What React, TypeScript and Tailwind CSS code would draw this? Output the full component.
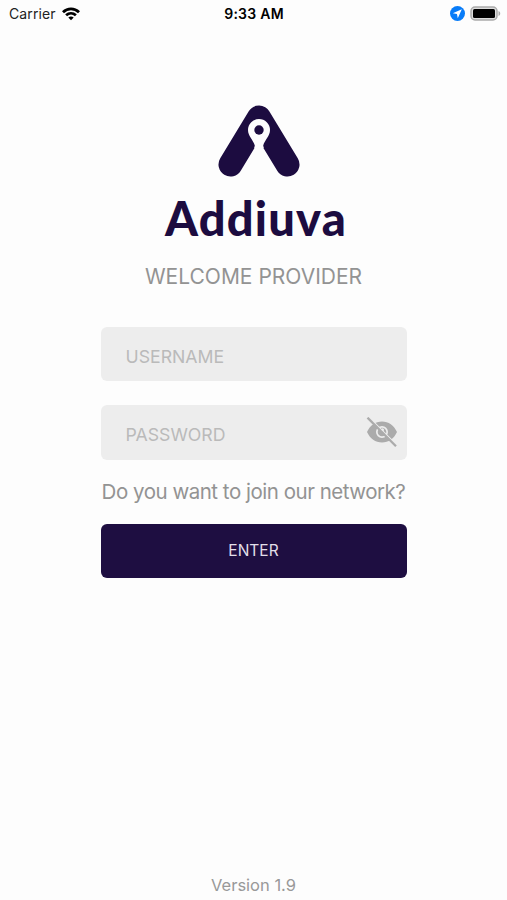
import { useState } from "react";

function StatusBar() {
  return (
    <header className="grid h-[27px] grid-cols-3 items-center pl-[9px] pr-[6px] text-[14px] text-[#222]">
      <div className="flex items-center gap-[6px]">
        <span className="tracking-[0.1px]">Carrier</span>
        <svg viewBox="0 0 18 14" className="h-[14px] w-[18px]" fill="none" stroke="#000" strokeWidth="2.8">
          <path d="M1 5.2C5.6.7 12.4.7 17 5.2" />
          <path d="M4.1 8.3C7 5.7 11 5.7 13.9 8.3" />
          <path d="M9 13.3 6.3 10.6C7.9 9.2 10.1 9.2 11.7 10.6Z" fill="#000" stroke="none" />
        </svg>
      </div>
      <span className="-ml-[2px] text-center font-semibold tracking-[0.25px] text-black">9:33 AM</span>
      <div className="flex items-center justify-end gap-[5px]">
        <svg viewBox="0 0 16 16" className="size-[15px]">
          <circle cx="8" cy="8" r="8" fill="#087cf8" />
          <path d="M12.6 3.4 3 7.7l4.4.9.9 4.4z" fill="#fff" />
        </svg>
        <svg viewBox="0 0 31 15" className="h-[15px] w-[31px]">
          <rect x="1" y="1" width="26" height="13" rx="4" fill="#ddd" stroke="#aaa" strokeWidth="1.5" />
          <rect x="3" y="3" width="22" height="9" rx="1.5" fill="#000" />
          <path d="M28.5 5v5c2.3-1.2 2.3-3.8 0-5z" fill="#aaa" />
        </svg>
      </div>
    </header>
  );
}

function Logo() {
  return (
    <div className="flex flex-col items-center text-[#1c0c40]">
      <svg viewBox="0 0 82 72" className="ml-[11px] h-[72px] w-[82px]">
        <path
          d="M12.5 59.5 41 12.5 69.5 59.5"
          fill="none"
          stroke="currentColor"
          strokeWidth="24"
          strokeLinecap="round"
          strokeLinejoin="round"
        />
        <path
          d="M41 14a11 11 0 0 0-11 11c0 6 5 9.5 6.8 15.500L36.200 43h9.600l-.600-2.500C47 34.500 52 31 52 25a11 11 0 0 0-11-11z"
          fill="#fdfdfd"
        />
        <circle cx="41" cy="25" r="4.700" fill="currentColor" />
      </svg>
      <h1 className="mt-[13px] ml-[5px] font-[Lato] text-[47px] leading-[57px] font-black tracking-[1.2px]">
        Addiuva
      </h1>
    </div>
  );
}

export default function App() {
  const [visible, setVisible] = useState(false);

  return (
    <div className="flex h-[900px] w-full flex-col bg-[#fdfdfd] font-[Inter,sans-serif]">
      <StatusBar />
      <main className="mx-auto mt-[78px] flex w-[306px] flex-col">
        <Logo />
        <h2 className="mt-[16px] text-center text-[21px] leading-[28px] whitespace-nowrap text-[#939393]">
          WELCOME PROVIDER
        </h2>
        <form className="mt-[36px] flex flex-col" onSubmit={(e) => e.preventDefault()}>
          <input
            placeholder="USERNAME"
            className="h-[54px] rounded-[6px] bg-[#ededed] px-[25px] pt-[5px] text-[17.7px] outline-none placeholder:text-[#bababa]"
          />
          <div className="mt-[24px] flex h-[55px] items-center rounded-[6px] bg-[#ededed] pr-[9px] pl-[25px]">
            <input
              type={visible ? "text" : "password"}
              placeholder="PASSWORD"
              className="min-w-0 flex-1 pt-[5px] text-[17.7px] outline-none placeholder:text-[#bababa]"
            />
            <button type="button" aria-label="Toggle password" onClick={() => setVisible(!visible)}>
              <svg viewBox="0 0 32 32" className="size-[32px]">
                <path
                  fillRule="evenodd"
                  d="M1 15C4 8.5 9.5 4.5 16 4.5s12 4 15 10.5c-3 6.5-8.5 10.5-15 10.5S4 21.5 1 15zm15-6a6 6 0 1 0 0 12 6 6 0 0 0 0-12z"
                  fill="#ababab"
                />
                <circle cx="16" cy="15" r="4.3" fill="#ababab" />
                <circle cx="16.5" cy="12.800" r="1.500" fill="#ededed" />
                <path d="M3.100.3 31.800 29" stroke="#ededed" strokeWidth="1.200" />
                <path d="M1.500.7 30 29.200" stroke="#ababab" strokeWidth="2.300" />
              </svg>
            </button>
          </div>
          <a className="mt-[18px] text-center text-[20.5px] leading-[28px] tracking-[-0.48px] whitespace-nowrap text-[#939393]">
            Do you want to join our network?
          </a>
          <button className="mt-[18px] h-[54px] rounded-[6px] bg-[#1e0e41] text-[15.5px] text-[#e2dfe9]">
            ENTER
          </button>
        </form>
      </main>
      <footer className="mt-auto pb-[3px] text-center text-[16.5px] leading-[24px] text-[#999]">
        Version 1.9
      </footer>
    </div>
  );
}
